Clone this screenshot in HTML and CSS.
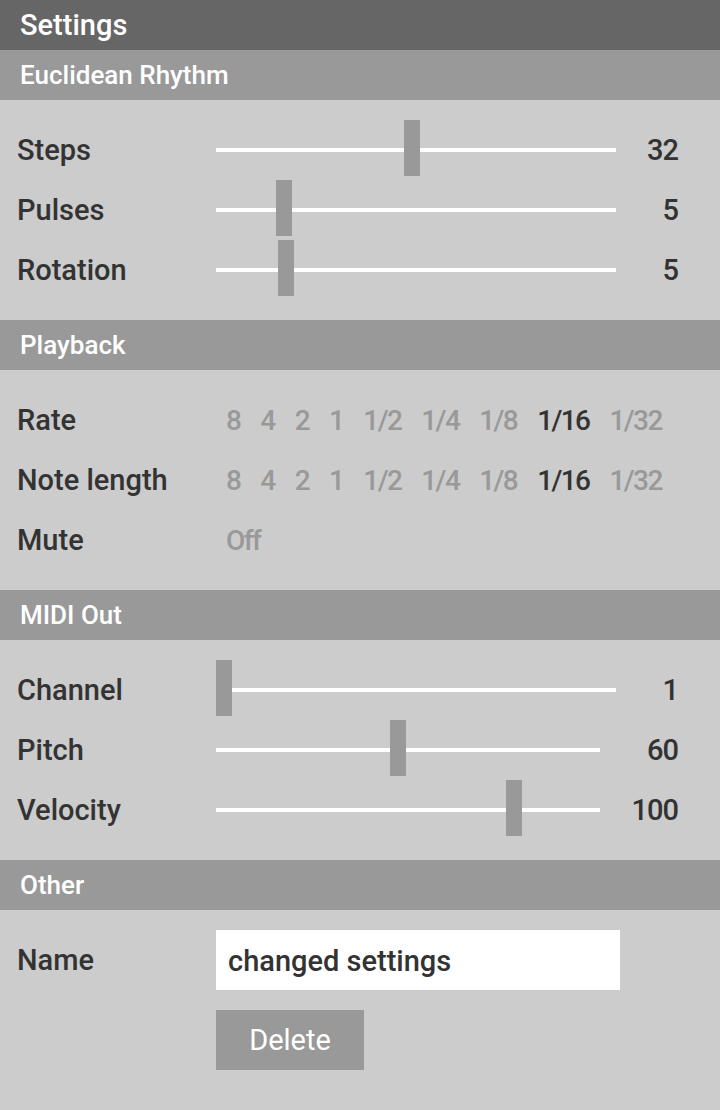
FILE: index.html
```html
<!DOCTYPE html>
<html>
<head>
<meta charset="utf-8">
<title>Settings</title>
<link rel="stylesheet" href="styles.css">
</head>
<body>
<div class="title">Settings</div>

<section class="group">
  <h2 class="group-head">Euclidean Rhythm</h2>
  <div class="group-body">
    <div class="row">
      <span class="label">Steps</span>
      <div class="slider"><div class="track"></div><div class="thumb" style="left:188px"></div></div>
      <span class="value">32</span>
    </div>
    <div class="row">
      <span class="label">Pulses</span>
      <div class="slider"><div class="track"></div><div class="thumb" style="left:60px"></div></div>
      <span class="value">5</span>
    </div>
    <div class="row">
      <span class="label">Rotation</span>
      <div class="slider"><div class="track"></div><div class="thumb" style="left:62px"></div></div>
      <span class="value">5</span>
    </div>
  </div>
</section>

<section class="group">
  <h2 class="group-head">Playback</h2>
  <div class="group-body">
    <div class="row">
      <span class="label">Rate</span>
      <div class="options">
        <span class="opt">8</span><span class="opt">4</span><span class="opt">2</span><span class="opt">1</span><span class="opt">1/2</span><span class="opt">1/4</span><span class="opt">1/8</span><span class="opt opt-on">1/16</span><span class="opt">1/32</span>
      </div>
    </div>
    <div class="row">
      <span class="label">Note length</span>
      <div class="options">
        <span class="opt">8</span><span class="opt">4</span><span class="opt">2</span><span class="opt">1</span><span class="opt">1/2</span><span class="opt">1/4</span><span class="opt">1/8</span><span class="opt opt-on">1/16</span><span class="opt">1/32</span>
      </div>
    </div>
    <div class="row">
      <span class="label">Mute</span>
      <div class="options">
        <span class="opt">Off</span>
      </div>
    </div>
  </div>
</section>

<section class="group">
  <h2 class="group-head">MIDI Out</h2>
  <div class="group-body">
    <div class="row">
      <span class="label">Channel</span>
      <div class="slider"><div class="track"></div><div class="thumb" style="left:0px"></div></div>
      <span class="value">1</span>
    </div>
    <div class="row">
      <span class="label">Pitch</span>
      <div class="slider slider-short"><div class="track"></div><div class="thumb" style="left:174px"></div></div>
      <span class="value">60</span>
    </div>
    <div class="row">
      <span class="label">Velocity</span>
      <div class="slider slider-short"><div class="track"></div><div class="thumb" style="left:290px"></div></div>
      <span class="value">100</span>
    </div>
  </div>
</section>

<section class="group">
  <h2 class="group-head">Other</h2>
  <div class="group-body group-body-last">
    <div class="row">
      <span class="label">Name</span>
      <div class="name-input">changed settings</div>
    </div>
    <div class="actions">
      <button class="btn" type="button">Delete</button>
    </div>
  </div>
</section>
</body>
</html>
```

FILE: styles.css
```css
html {
  background: #cccccc;
}
body {
  margin: 0;
  background: #cccccc;
  font-family: Roboto, "Liberation Sans", sans-serif;
  color: #333333;
}
.title {
  height: 50px;
  line-height: 50px;
  background: #666666;
  color: #ffffff;
  font-size: 29px;
  font-weight: 500;
  padding-left: 20px;
}
.group-head {
  margin: 0;
  height: 50px;
  line-height: 50px;
  background: #999999;
  color: #ffffff;
  font-size: 26px;
  font-weight: 500;
  padding-left: 20px;
}
.group-body {
  padding: 20px 0;
}
.group-body-last {
  padding-bottom: 40px;
}
.row {
  display: flex;
  align-items: center;
  height: 60px;
  padding-left: 17px;
}
.label {
  width: 199px;
  flex: none;
  font-size: 29px;
  font-weight: 500;
  color: #333333;
  line-height: 60px;
}
.slider {
  position: relative;
  width: 400px;
  height: 60px;
  flex: none;
}
.slider-short {
  width: 384px;
}
.track {
  position: absolute;
  left: 0;
  right: 0;
  top: 28px;
  height: 4px;
  background: #ffffff;
}
.thumb {
  position: absolute;
  top: 0;
  width: 16px;
  height: 56px;
  background: #999999;
}
.value {
  flex: 1;
  text-align: right;
  padding-right: 42px;
  font-size: 29px;
  font-weight: 500;
  letter-spacing: -1px;
  color: #333333;
}
.options {
  display: flex;
  font-size: 28px;
  font-weight: 500;
  letter-spacing: -1.6px;
}
.opt {
  padding: 0 10px;
  color: #999999;
}
.opt-on {
  color: #333333;
}
.name-input {
  width: 392px;
  height: 60px;
  line-height: 62px;
  background: #ffffff;
  padding-left: 12px;
  font-size: 29px;
  font-weight: 500;
  color: #333333;
  box-sizing: content-box;
}
.actions {
  padding-left: 216px;
  margin-top: 20px;
}
.btn {
  display: block;
  width: 148px;
  height: 60px;
  padding: 0;
  border: 0;
  margin: 0;
  background: #999999;
  color: #ffffff;
  font-family: Roboto, "Liberation Sans", sans-serif;
  font-size: 29px;
  font-weight: 400;
  text-align: center;
}
```
